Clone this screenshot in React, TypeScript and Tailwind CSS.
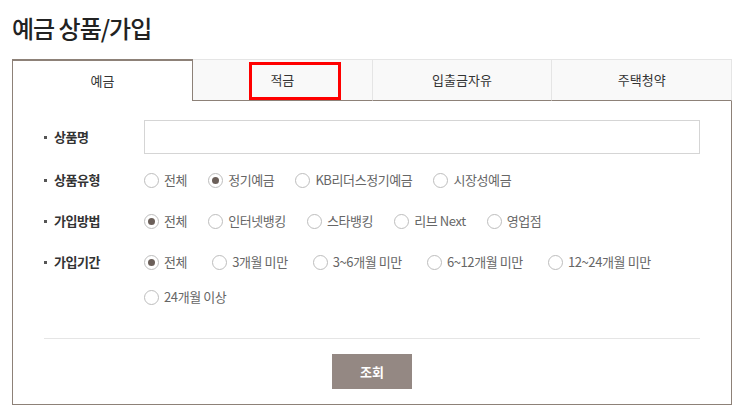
import React, { useState } from "react";

type RadioRowProps = {
  label: string;
  options: string[];
  selected: number;
  gap: string;
  className?: string;
};

const tabs = ["예금", "적금", "입출금자유", "주택청약"];

const Bullet: React.FC<{ text: string }> = ({ text }) => (
  <div className="w-[100px] shrink-0 flex items-center">
    <span className="w-[3px] h-[3px] bg-[#555] mr-[7px]" />
    <span className="text-[13px] font-bold text-[#333] tracking-[-0.5px]">{text}</span>
  </div>
);

const Radio: React.FC<{ text: string; checked: boolean; onClick: () => void }> = ({ text, checked, onClick }) => (
  <label className="flex items-center cursor-pointer" onClick={onClick}>
    <span className="w-[15px] h-[15px] rounded-full border border-[#bdbdbd] bg-white flex items-center justify-center shrink-0">
      {checked && <span className="w-[7px] h-[7px] rounded-full bg-[#6b5f59]" />}
    </span>
    <span className="ml-[5px] text-[13px] text-[#666] leading-[20px] tracking-[-0.4px]">{text}</span>
  </label>
);

const RadioRow: React.FC<RadioRowProps> = ({ label, options, selected, gap, className }) => {
  const [value, setValue] = useState(selected);
  return (
    <div className={`flex items-start ${className ?? ""}`}>
      <div className="h-[20px] flex items-center">
        <Bullet text={label} />
      </div>
      <div className={`flex flex-wrap gap-y-[15px] ${gap}`}>
        {options.map((o, i) => (
          <Radio key={o} text={o} checked={value === i} onClick={() => setValue(i)} />
        ))}
      </div>
    </div>
  );
};

export default function App() {
  const [activeTab] = useState(0);

  return (
    <div className="bg-white w-[741px] h-[417px] pl-[12px] pt-[13px]" style={{ fontFamily: '"Noto Sans CJK KR", "Noto Sans", sans-serif' }}>
      <h2 className="text-[24px] leading-[30px] font-medium text-[#222] tracking-[-1px]">예금 상품/가입</h2>

      <div className="w-[720px] mt-[16px]">
        {/* tabs */}
        <div className="flex relative h-[42px]">
          {tabs.map((t, i) =>
            i === activeTab ? (
              <div
                key={t}
                className="w-[181px] border-t-2 border-l border-r border-[#8d8178] bg-white flex items-center justify-center text-[13px] text-[#333]"
              >
                {t}
              </div>
            ) : (
              <div
                key={t}
                className={`flex-1 bg-[#f9f9f9] border-t border-[#e5e5e5] border-b border-b-[#8d8178] flex items-center justify-center text-[13px] text-[#333] ${
                  i < tabs.length - 1 && i !== activeTab - 1 ? "border-r border-r-[#e5e5e5]" : ""
                } ${i === tabs.length - 1 ? "border-r border-r-[#e5e5e5]" : ""}`}
              >
                {t}
              </div>
            )
          )}
          {/* highlight box */}
          <div className="absolute left-[237px] top-[3px] w-[92px] h-[38px] border-[3px] border-[#ff0000]" />
        </div>

        {/* panel */}
        <div className="border-l border-r border-b border-[#8d8178] px-[31px] pt-[19px] pb-[15px]">
          <div className="flex items-center">
            <Bullet text="상품명" />
            <input className="w-[556px] h-[34px] border border-[#d5d5d5] outline-none px-2" />
          </div>

          <RadioRow
            className="mt-[16px]"
            label="상품유형"
            options={["전체", "정기예금", "KB리더스정기예금", "시장성예금"]}
            selected={1}
            gap="gap-x-[21px]"
          />
          <RadioRow
            className="mt-[21px]"
            label="가입방법"
            options={["전체", "인터넷뱅킹", "스타뱅킹", "리브 Next", "영업점"]}
            selected={0}
            gap="gap-x-[21px]"
          />
          <RadioRow
            className="mt-[21px]"
            label="가입기간"
            options={["전체", "3개월 미만", "3~6개월 미만", "6~12개월 미만", "12~24개월 미만", "24개월 이상"]}
            selected={0}
            gap="gap-x-[25px] w-[556px]"
          />

          <div className="h-px bg-[#e5e5e5] mt-[31px]" />

          <div className="flex justify-center mt-[15px]">
            <button className="w-[80px] h-[35px] bg-[#948883] text-white text-[13px] font-bold">조회</button>
          </div>
        </div>
      </div>
    </div>
  );
}
